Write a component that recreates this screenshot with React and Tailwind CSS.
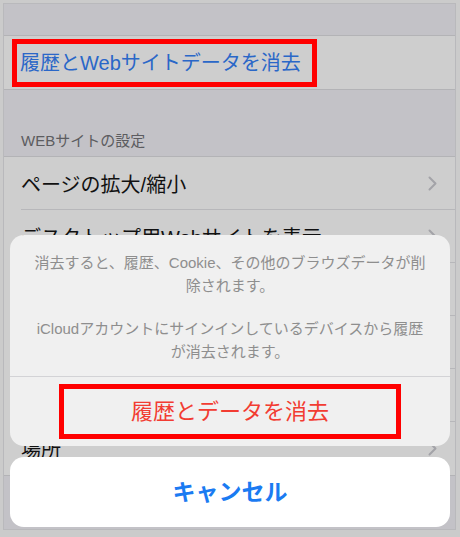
import React from "react";

const font = { fontFamily: '"Liberation Sans", "Noto Sans CJK JP", sans-serif' };

const Chevron = () => (
  <svg width="9" height="15" viewBox="0 0 9 15" fill="none">
    <path d="M1.5 1.5L7.5 7.5L1.5 13.5" stroke="#a3a3a8" strokeWidth="2" strokeLinecap="round" strokeLinejoin="round" />
  </svg>
);

const Row = ({ label, last }) => (
  <div className="flex h-[53px] items-center bg-[#cecece] pl-[17px]">
    <div className={`flex h-full flex-1 items-center justify-between pr-[18px] ${last ? "" : "border-b border-[#b7b7ba]"}`}>
      <span className="pt-[3px] text-[20px] text-[#111111]">{label}</span>
      <Chevron />
    </div>
  </div>
);

const App = () => {
  return (
    <div style={font} className="relative h-[537px] w-[460px] overflow-hidden bg-[#cbcbcb] pb-[7px] pl-[3px] pr-[4px] pt-[3px]">
      <div className="h-full overflow-hidden border border-[#b9b9bc] bg-[#c3c2c7]">
        <div className="h-[32px] border-b border-[#b3b3b6]" />

        <div className="flex h-[54px] items-center border-b border-[#b3b3b6] bg-[#cecece] pl-[8px]">
          <div className="flex h-[48px] items-center border-[5px] border-[#ff0000] pl-[3px] pr-[11px]">
            <span className="text-[20px] text-[#2a67c8]">履歴とWebサイトデータを消去</span>
          </div>
        </div>

        <div className="flex h-[67px] items-end border-b border-[#b3b3b6] pb-[4px] pl-[17px]">
          <span className="text-[15px] text-[#5c5c60]">WEBサイトの設定</span>
        </div>

        <Row label="ページの拡大/縮小" />
        <Row label="デスクトップ用Webサイトを表示" />
        <Row label="" />
        <Row label="" />
        <Row label="" />
        <Row label="場所" last />
        <div className="border-t border-[#b3b3b6]" />
      </div>

      <div className="absolute bottom-[10px] left-[10px] right-[10px] flex flex-col gap-[11px]">
        <div className="overflow-hidden rounded-[14px] bg-[#f0f0f0]">
          <div className="flex flex-col gap-[20px] px-[20px] pb-[13px] pt-[16px] text-center text-[15px] leading-[23px] text-[#8e8e8e]">
            <p>
              消去すると、履歴、Cookie、その他のブラウズデータが削
              <br />
              除されます。
            </p>
            <p>
              iCloudアカウントにサインインしているデバイスから履歴
              <br />
              が消去されます。
            </p>
          </div>
          <div className="flex h-[70px] items-center justify-center border-t border-[#d3d3d6]">
            <div className="flex h-[55px] w-[342px] items-center justify-center border-[5px] border-[#ff0000]">
              <span className="text-[22px] text-[#f23c32]">履歴とデータを消去</span>
            </div>
          </div>
        </div>

        <div className="flex h-[70px] items-center justify-center rounded-[14px] bg-white">
          <span className="text-[23px] font-bold text-[#1a7bf2]">キャンセル</span>
        </div>
      </div>
    </div>
  );
};

export default App;
